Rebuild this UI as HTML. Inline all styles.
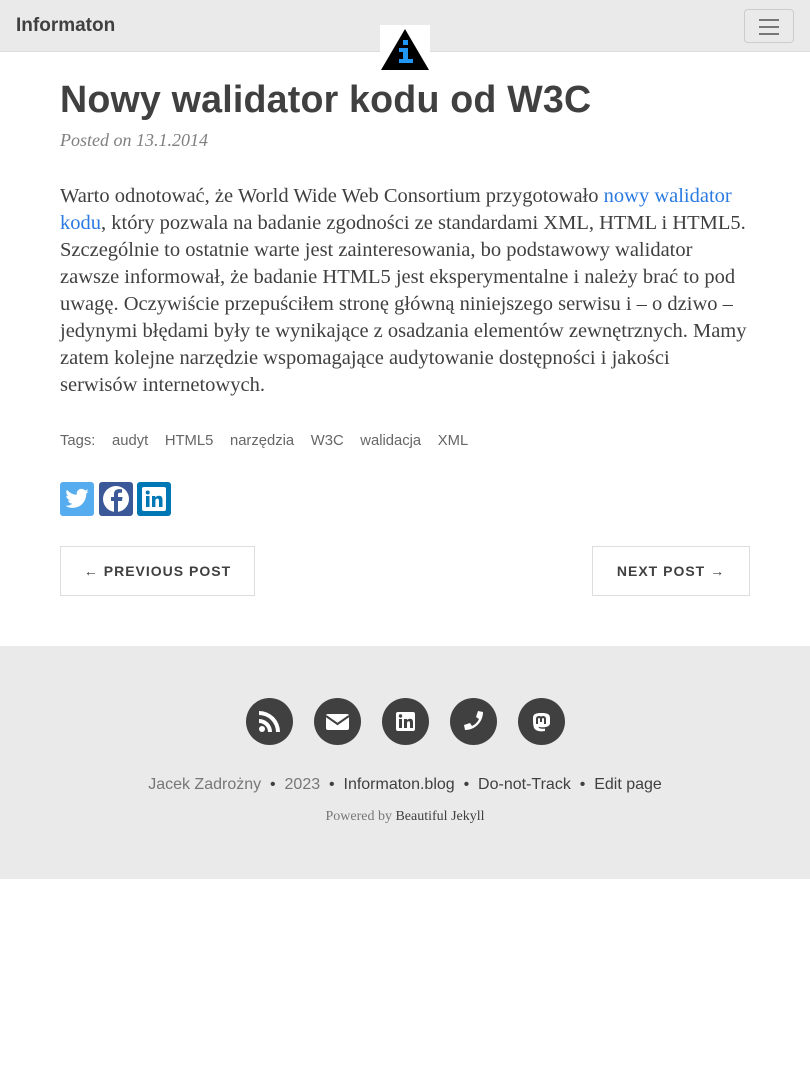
<!DOCTYPE html>
<html><head><meta charset="utf-8"><style>
*{margin:0;padding:0;box-sizing:border-box}
body{width:810px;height:1080px;background:#fff;font-family:"Liberation Serif",serif;color:#404040;position:relative;overflow:hidden}
.nav{position:absolute;left:0;top:0;width:810px;height:52px;background:#eaeaea;border-bottom:1px solid #ddd}
.brand{position:absolute;left:16px;top:15px;font:bold 19px "Liberation Sans",sans-serif;color:#404040}
.tog{position:absolute;left:744px;top:9px;width:50px;height:34px;border:1px solid #ccc;border-radius:4px}
.tog i{position:absolute;left:14px;width:20px;height:2px;background:#777}
.logo{position:absolute;left:380px;top:25px;width:50px;height:46px;background:#fff}
h1{position:absolute;left:60px;top:78px;font:bold 37.6px "Liberation Sans",sans-serif;color:#404040;letter-spacing:0.2px}
.meta{position:absolute;left:60px;top:130px;font-style:italic;font-size:18px;color:#808080}
.post{position:absolute;left:60px;top:183px;width:720px;font-size:20.5px;line-height:27px;white-space:nowrap}
.post a{color:#2a7ae2;text-decoration:none}
.tags{position:absolute;left:60px;top:433px;font:14.8px "Liberation Sans",sans-serif;color:#666}
.tags span{margin-right:12.5px}
.sh{position:absolute;top:482px;width:34px;height:34px;border-radius:3px}
.btn{position:absolute;top:546px;height:50px;border:1px solid #ddd;font:bold 14px "Liberation Sans",sans-serif;letter-spacing:1px;color:#404040;line-height:48px;text-align:center}
.foot{position:absolute;left:0;top:646px;width:810px;height:233px;background:#eaeaea}
.c{position:absolute;top:52px;width:47px;height:47px;border-radius:50%;background:#404040}
.c svg{position:absolute;left:11px;top:11px}
.fl{position:absolute;top:130px;width:810px;text-align:center;font:16px "Liberation Sans",sans-serif;color:#404040}
.fl .g{color:#777}
.pw{position:absolute;top:163px;width:810px;text-align:center;font-size:14px;color:#777}
</style></head><body>
<div class="nav"><div class="brand">Informaton</div><div class="tog"><i style="top:9px"></i><i style="top:16px"></i><i style="top:23px"></i></div></div>
<div class="logo"><svg width="50" height="46"><polygon points="25,4 49,45 1,45" fill="#000"/><rect x="23" y="15" width="5" height="5" fill="#2196f3"/><rect x="19" y="23" width="9" height="4" fill="#2196f3"/><rect x="23" y="23" width="5" height="13" fill="#2196f3"/><rect x="19" y="34" width="14" height="4" fill="#2196f3"/></svg></div>
<h1>Nowy walidator kodu od W3C</h1>
<div class="meta">Posted on 13.1.2014</div>
<div class="post">Warto odnotować, że World Wide Web Consortium przygotowało <a>nowy walidator</a><br><a>kodu</a>, który pozwala na badanie zgodności ze standardami XML, HTML i HTML5.<br>Szczególnie to ostatnie warte jest zainteresowania, bo podstawowy walidator<br>zawsze informował, że badanie HTML5 jest eksperymentalne i należy brać to pod<br>uwagę. Oczywiście przepuściłem stronę główną niniejszego serwisu i – o dziwo –<br>jedynymi błędami były te wynikające z osadzania elementów zewnętrznych. Mamy<br>zatem kolejne narzędzie wspomagające audytowanie dostępności i jakości<br>serwisów internetowych.</div>
<div class="tags"><span>Tags:</span> <span>audyt</span> <span>HTML5</span> <span>narzędzia</span> <span>W3C</span> <span>walidacja</span> <span>XML</span></div>
<div class="sh" style="left:60px;background:#55acee"><svg width="34" height="34" viewBox="0 0 24 24"><path transform="translate(3,3) scale(.75)" fill="#fff" d="M23 4.6a9 9 0 0 1-2.6.7A4.6 4.6 0 0 0 22.4 2.8a9 9 0 0 1-2.9 1.1A4.5 4.5 0 0 0 11.8 8 12.8 12.8 0 0 1 2.5 3.3a4.5 4.5 0 0 0 1.4 6 4.5 4.5 0 0 1-2-.6v.1a4.5 4.5 0 0 0 3.6 4.4 4.5 4.5 0 0 1-2 .1 4.5 4.5 0 0 0 4.2 3.1A9 9 0 0 1 1 18.3 12.8 12.8 0 0 0 7.9 20.3c8.3 0 12.8-6.9 12.8-12.8v-.6A9 9 0 0 0 23 4.6z"/></svg></div>
<div class="sh" style="left:99px;background:#3b5998"><svg width="34" height="34"><circle cx="17" cy="17" r="13" fill="#fff"/><path d="M19 31V19h4l.5-4H19v-2.5c0-1 .4-1.8 2-1.8h2V7.3c-.5 0-1.7-.2-3-.2-3 0-5 1.800-5 5V15h-3v4h3v12z" fill="#3b5998"/></svg></div>
<div class="sh" style="left:137px;background:#0077b5"><svg width="34" height="34"><rect x="5" y="5" width="24" height="24" rx="2" fill="#fff"/><rect x="9" y="14" width="3.5" height="11" fill="#0077b5"/><circle cx="10.7" cy="10.5" r="2" fill="#0077b5"/><path d="M15 14h3.3v1.6c.6-1 1.800-1.900 3.700-1.900 3 0 3.500 2 3.500 4.600V25H22v-5.800c0-1.300-.2-2.600-1.700-2.600s-1.900 1.100-1.900 2.600V25H15z" fill="#0077b5"/></svg></div>
<div class="btn" style="left:60px;width:195px">← PREVIOUS POST</div>
<div class="btn" style="left:592px;width:158px">NEXT POST →</div>
<div class="foot">
<div class="c" style="left:246px"><svg width="25" height="25" viewBox="0 0 25 25"><circle cx="5" cy="20" r="3" fill="#fff"/><path d="M2 10a13 13 0 0 1 13 13h-4a9 9 0 0 0-9-9z M2 2a21 21 0 0 1 21 21h-4A17 17 0 0 0 2 6z" fill="#fff"/></svg></div>
<div class="c" style="left:314px"><svg width="25" height="25" viewBox="0 0 25 25"><rect x="1" y="5" width="23" height="16" rx="2" fill="#fff"/><path d="M1 7l11.5 8L24 7" stroke="#404040" stroke-width="2" fill="none"/></svg></div>
<div class="c" style="left:382px"><svg width="25" height="25" viewBox="0 0 25 25"><rect x="3" y="3" width="19" height="19" rx="2" fill="#fff"/><rect x="6" y="10" width="3" height="9" fill="#404040"/><circle cx="7.5" cy="7" r="1.7" fill="#404040"/><path d="M11 10h3v1.3c.5-.8 1.500-1.500 3-1.500 2.500 0 3 1.700 3 3.700V19h-3v-4.800c0-1-.2-2-1.400-2s-1.600.9-1.600 2V19h-3z" fill="#404040"/></svg></div>
<div class="c" style="left:450px"><svg width="25" height="25" viewBox="0 0 25 25"><path d="M22 3l-5-1-2 6 3 2a14 14 0 0 1-7 7l-2-3-6 2 1 5c10 0 18-8 18-18z" fill="#fff"/></svg></div>
<div class="c" style="left:518px"><svg width="25" height="25" viewBox="0 0 25 25"><path d="M4 9c0-4 3-5 8.500-5S21 5 21 9v5c0 3-3 4-6 4.300-2 .2-4 0-5.500-.5 0 1.500 2 2.300 6.500 1.800L16 22c-6 1.200-11-.5-11.500-5C4 15 4 12 4 9z" fill="#fff"/><path d="M8 15v-5c0-1.500 1-2 2-2s2 .5 2 2v3m0-3c0-1.500 1-2 2-2s2 .5 2 2v5" stroke="#404040" stroke-width="2" fill="none"/></svg></div>
<div class="fl"><span class="g">Jacek Zadrożny</span> &nbsp;•&nbsp; <span class="g">2023</span> &nbsp;•&nbsp; Informaton.blog &nbsp;•&nbsp; Do-not-Track &nbsp;•&nbsp; Edit page</div>
<div class="pw">Powered by <span style="color:#404040">Beautiful Jekyll</span></div>
</div>
</body></html>
